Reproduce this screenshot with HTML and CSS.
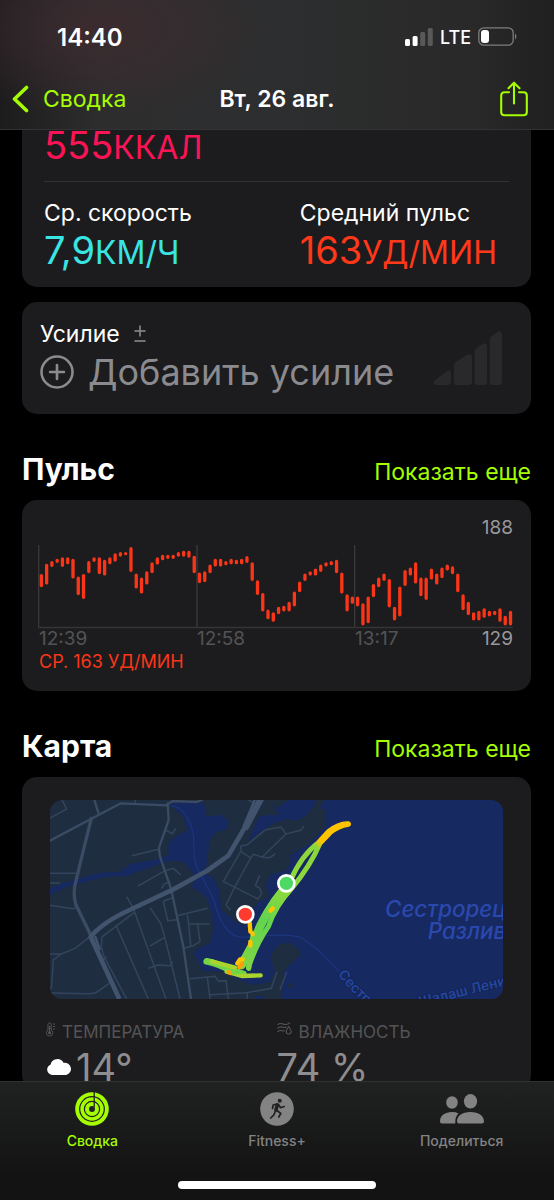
FILE: index.html
```html
<!DOCTYPE html>
<html lang="ru">
<head>
<meta charset="utf-8">
<meta name="viewport" content="width=device-width, initial-scale=1">
<title>Вт, 26 авг.</title>
<link rel="stylesheet" href="styles.css">
</head>
<body>
<div class="app">
  <header class="top">
    <div class="status">
      <span class="clock">14:40</span>
      <div class="status-icons">
        <svg class="signal" viewBox="0 0 28 18" aria-hidden="true">
          <rect x="0" y="11" width="5" height="7" rx="1.5" fill="#fff"/>
          <rect x="7.6" y="8" width="5" height="10" rx="1.5" fill="#fff"/>
          <rect x="15.2" y="4" width="5" height="14" rx="1.5" fill="#59595a"/>
          <rect x="22.8" y="0" width="5" height="18" rx="1.5" fill="#59595a"/>
        </svg>
        <span class="network">LTE</span>
        <svg class="battery" viewBox="0 0 39 20" aria-hidden="true">
          <rect x=".8" y=".8" width="34.4" height="17.4" rx="5" fill="none" stroke="#7d7d7f" stroke-width="1.3"/>
          <rect x="3" y="3" width="8" height="13" rx="3" fill="#fff"/>
          <path d="M37 6.5c1.8 1 1.8 5 0 6z" fill="#7d7d7f"/>
        </svg>
      </div>
    </div>
    <nav class="navbar">
      <a class="back" href="#summary">
        <svg class="chevron" viewBox="0 0 17 28" aria-hidden="true"><path d="M14.5 2.5 2.5 14l12 11.5" fill="none" stroke="currentColor" stroke-width="3.6" stroke-linecap="round" stroke-linejoin="round"/></svg>
        <span>Сводка</span>
      </a>
      <h1 class="title">Вт, 26 авг.</h1>
      <button class="share" type="button" aria-label="Поделиться тренировкой">
        <svg class="share-icon" viewBox="0 0 28 36" aria-hidden="true"><path d="M9 11.300H4.500Q1.200 11.300 1.200 14.600V31Q1.200 34.300 4.500 34.300H23.500Q26.800 34.300 26.800 31V14.600Q26.800 11.300 23.500 11.300H19M14 22.500V1.800M8.500 7.200 14 1.700l5.500 5.500" fill="none" stroke="currentColor" stroke-width="2.100" stroke-linecap="round" stroke-linejoin="round"/></svg>
      </button>
    </nav>
  </header>

  <main class="content">
    <section class="card metrics">
      <div class="metric-value kcal">555<span class="unit">ККАЛ</span></div>
      <div class="metric-grid">
        <div>
          <div class="label">Ср. скорость</div>
          <div class="metric-value speed">7,9<span class="unit">КМ/Ч</span></div>
        </div>
        <div>
          <div class="label">Средний пульс</div>
          <div class="metric-value pulse">163<span class="unit">УД/МИН</span></div>
        </div>
      </div>
    </section>

    <section class="card effort">
      <div>
        <div class="effort-head"><span class="label">Усилие</span><svg class="plus-minus" viewBox="0 0 12 18" aria-hidden="true"><path d="M6 1v10M1 6h10M1 16h10" fill="none" stroke="currentColor" stroke-width="1.500" stroke-linecap="round"/></svg></div>
        <button class="add" type="button">
          <svg class="add-icon" viewBox="0 0 32 32" aria-hidden="true"><circle cx="16" cy="16" r="14.600" fill="none" stroke="currentColor" stroke-width="2.400"/><path d="M16 9.500v13M9.500 16h13" stroke="currentColor" stroke-width="2.500" stroke-linecap="round"/></svg>
          <span>Добавить усилие</span>
        </button>
      </div>
      <svg class="effort-bars" viewBox="0 0 70 54" aria-hidden="true" fill="#29292b">
        <path d="M1.500 49.500 14 40q4-2 4 2v9q0 3-3 3H3q-4-1-1.500-4.500z"/>
        <path d="M21 35q0-3 2-4.500L34 24q5-2 5 2v25q0 3-3 3H24q-3 0-3-3z"/>
        <path d="M41.500 21q0-3 2-4l6-4q4.500-2 4.500 2v36q0 3-3 3h-6.500q-3 0-3-3z"/>
        <path d="M56.800 9q0-2.500 2-4l6-4.500Q69 -.5 69 4v47q0 3-3 3h-6.200q-3 0-3-3z"/>
      </svg>
    </section>

    <div class="section-head"><h2>Пульс</h2><a href="#pulse">Показать еще</a></div>
    <section class="card heart">
      <div class="max">188</div>
      <svg class="chart" id="chart" viewBox="0 0 1428 252" role="img" aria-label="График пульса">
        <path d="M2 0V248M478 0V248M952 0V248" stroke="#3a3a3c" stroke-width="4"/>
        <path d="M0 248H1428" stroke="#343437" stroke-width="5"/>
        <path id="bars" stroke="#fb3618" stroke-width="10" stroke-linecap="round"/>
      </svg>
      <div class="axis"><span>12:39</span><span>12:58</span><span class="last"><span>13:17</span><span class="min">129</span></span></div>
      <div class="average">СР. 163 УД/МИН</div>
    </section>

    <div class="section-head"><h2>Карта</h2><a href="#map">Показать еще</a></div>
    <section class="card place">
      <svg class="map" viewBox="30 30 1359 597" role="img" aria-label="Маршрут">
        <defs>
          <linearGradient id="track" gradientUnits="userSpaceOnUse" x1="930" y1="95" x2="600" y2="540">
            <stop offset="0" stop-color="#ffc400"/><stop offset=".18" stop-color="#ffc400"/><stop offset=".22" stop-color="#8bd63c"/><stop offset=".5" stop-color="#8fd93c"/><stop offset=".7" stop-color="#63d44e"/><stop offset="1" stop-color="#80d643"/>
          </linearGradient>
          <path id="river-label" d="M893 553Q940 620 1040 690"/>
        </defs>
        <rect x="30" y="30" width="1359" height="597" fill="#1f2d41"/>
        <path fill="#162960" d="M855 30 840 50 858 65 855 110 810 160 750 195 752 215 740 240 690 255 675 290 690 320 650 340 630 370 620 405 590 400 570 380 545 360 540 320 535 290 520 262 490 248 500 225 510 150 530 125 560 118 568 95 545 75 500 80 492 40 440 36 390 42 430 80 442 120 400 145 385 160 385 195 355 208 270 222 240 245 180 248 120 265 60 283 30 295 30 314 80 290 150 272 200 260 260 258 300 242 390 212 430 215 450 240 470 260 453 290 470 300 500 325 515 370 520 420 510 460 470 478 461 492 490 545 540 542 600 570 640 585 690 575 705 545 695 515 690 500 705 475 720 462 750 458 780 480 782 495 750 525 730 545 728 580 725 627 1389 627 1389 30Z"/>
        <path fill="#162960" d="M625 155 655 80 685 75 720 75 690 40 710 55 745 30H830L820 50 800 75 770 92 740 88 700 100 655 130ZM645 627l5-10 15 0 6 10z"/>
        <path fill="#1f2d41" d="m742 582 22-3-4 12-12 5z"/>
        <path fill="none" stroke="#1d3580" stroke-width="3.500" d="M392 48q30 0 50 35 18 30 19 70 0 60 12 85 30 55 50 95 20 90 70 107 30 5 100-4 80-3 100 13 40 25 105 95"/>
        <g fill="none" stroke="#33445c" stroke-width="4.500">
          <path d="M66 30 80 57 30 84M286 30v10M30 250H108M30 279H60M30 346 98 356 112 352M30 492H64L105 475 150 440M64 492 40 510 35 590 30 600M30 609 150 611 168 608 208 580M275 197 356 178M294 288 375 242 400 235 422 255M365 296 372 282 390 276M377 120 397 131 408 115M396 324 370 334 383 392 412 389M260 320 280 355 378 627M283 367 186 441 184 470 192 500 260 627M230 410 325 627M190 508 200 500M330 353 362 400 374 440 420 627M330 468 374 442M325 535 353 525 390 527 398 515M412 377 503 355M442 375 446 402H509M446 402 452 468M433 474 458 468 480 455 473 402M450 566 525 559 536 574 558 572 565 627M502 562 510 627M510 614 620 608 694 595 711 545M622 608 622 627"/>
          <path d="M602 168 604 185 632 204M602 168 620 165 677 119 723 111 738 132 782 121 792 108M738 132 666 202M632 204 640 193 668 202 690 203 706 191M602 185 550 274 654 327 665 310 659 294 646 287 659 256M632 204 582 296 558 345 571 360M625 30 640 38M740 545 720 600"/>
        </g>
        <g fill="none" stroke="#3b4b64" stroke-linecap="round">
          <path stroke-width="7" d="M30 152 242 40 378 46 398 33 470 36 485 30M163 30 175 68M383 40 386 90 358 170Q355 190 365 215L393 295 430 470 453 627"/>
          <path stroke-width="10" d="M154 85Q130 180 104 290 100 320 108 345L152 435"/>
        </g>
        <g fill="none" stroke="#42536d" stroke-linejoin="round">
          <path stroke-width="14" d="M659 28 610 120 565 197 500 243 400 298 275 357Q190 395 152 440L238 627"/>
          <path stroke-width="7" d="M645 28 610 110M669 28 620 120M165 438 180 480"/>
        </g>
        <text class="lake-name" x="1035" y="382">Сестрорецкий</text>
        <text class="lake-name" x="1163" y="448">Разлив</text>
        <text class="river-name"><textPath href="#river-label">Сестрорецк</textPath></text>
        <text class="river-name" transform="translate(1140 650) rotate(-14)">Шалаш Ленина</text>
        <g fill="none" stroke="url(#track)" stroke-linecap="round" stroke-linejoin="round">
          <path stroke-width="15" d="M925 101Q895 100 865 125L835 158Q785 195 752 270 690 330 662 400 640 460 600 520"/>
          <path stroke-width="15" d="M925 103Q895 108 870 128L840 160Q810 230 755 295 705 350 685 410 650 460 626 530"/>
          <path stroke-width="26" d="M745 292Q690 345 660 410L640 460 605 525"/>
          <path stroke-width="16" d="M640 430Q635 480 626 535"/>
        </g>
        <g fill="none" stroke-linecap="round" stroke-linejoin="round">
          <path stroke="#72d548" stroke-width="20" d="M500 514Q530 520 570 540L610 552"/>
          <path stroke="#a9d42e" stroke-width="13" d="M515 514 585 533M560 545 605 558 662 556"/>
          <path stroke="#ffc400" stroke-width="13" d="M629 398 631 425M631 455V467M592 520 600 508H608M638 431V433M692 362 698 355"/>
          <path stroke="#ff9d0a" stroke-width="13" d="M598 532 606 521M567 547 572 549"/>
          <path stroke="#72d548" stroke-width="15" d="M580 546 596 545"/>
        </g>
        <circle cx="616" cy="373" r="24" fill="#ff3b30" stroke="#fff" stroke-width="8"/>
        <circle cx="739" cy="280" r="24" fill="#4cd964" stroke="#fff" stroke-width="8"/>
      </svg>
      <div class="weather">
        <div>
          <div class="weather-label">
            <svg class="thermo" viewBox="0 0 9 15" aria-hidden="true"><path d="M2 8V2.500a1.600 1.600 0 0 1 3.200 0V8a3.200 3.200 0 1 1-3.200 0zM7 2h2M7 4.500h2M7 7h2" fill="none" stroke="currentColor" stroke-width="1"/><path d="M3.600 4v5" stroke="currentColor" stroke-width="1.200"/><circle cx="3.600" cy="10.700" r="1.600" fill="currentColor"/></svg>
            <span>ТЕМПЕРАТУРА</span>
          </div>
          <div class="weather-value">
            <svg class="cloud" viewBox="0 0 26 17" aria-hidden="true"><path d="M6 17a6 5.500 0 0 1-1.500-10.300A7 7 0 0 1 17.500 4.800 6.200 6.200 0 1 1 20 17z" fill="#fff"/></svg>
            <span>14°</span>
          </div>
        </div>
        <div>
          <div class="weather-label">
            <svg class="humid" viewBox="0 0 15 13" aria-hidden="true"><path d="M.500 2.800Q3 .800 6 2t6-.500l1-.700M.500 6.300Q3 4.300 6 5.200 8 5.800 9.500 5M.500 9.800Q3 7.800 6 9l2-.200M11.700 4.500Q9.200 8 9.200 9.500a2.500 2.500 0 0 0 5 0Q14.200 8 11.700 4.500z" fill="none" stroke="currentColor" stroke-width="1.100"/></svg>
            <span>ВЛАЖНОСТЬ</span>
          </div>
          <div class="weather-value">74 %</div>
        </div>
      </div>
    </section>
  </main>

  <footer class="bottom">
    <nav class="tabs">
      <a class="tab active" href="#summary">
        <svg class="tab-icon" viewBox="0 0 34 34" aria-hidden="true"><circle cx="17" cy="17" r="16.800" fill="currentColor"/><g fill="none" stroke="#202121" stroke-width="1.200"><circle cx="17" cy="17" r="12.300"/><circle cx="17" cy="17" r="7.600"/></g><circle cx="17" cy="17" r="3" fill="#202121"/><path d="M19.200 0v15" stroke="#202121" stroke-width="1.300"/></svg>
        <span>Сводка</span>
      </a>
      <a class="tab" href="#fitness">
        <svg class="tab-icon" viewBox="0 0 34 34" aria-hidden="true"><circle cx="17" cy="17" r="16.800" fill="currentColor"/><circle cx="19.700" cy="8.700" r="2" fill="#202121"/><g fill="none" stroke="#202121" stroke-linecap="round" stroke-linejoin="round"><path stroke-width="3.500" d="M17.300 13 15.900 18"/><path stroke-width="1.700" d="m17 12-3.800 1-.7 3.500M18.500 12.500l2 3.200 3.700-1.200M17 18.500l3.800 3-2 3.500M15.500 19l-1.800 4.200-3 2.800"/></g></svg>
        <span>Fitness+</span>
      </a>
      <a class="tab" href="#sharing">
        <svg class="tab-icon people" viewBox="0 0 44 34" aria-hidden="true" fill="currentColor"><ellipse cx="12" cy="10.500" rx="5.800" ry="6.200"/><ellipse cx="30.500" cy="9.300" rx="6.600" ry="7.200"/><path d="M0 29.500C0 23.500 5 20 12 20q4 0 6.500 1.400-3.500 3.300-3.200 9.600v.600H2Q0 31.600 0 29.500zM17 29.500C17 24 22 20 30.500 20S44 24 44 29.500q0 2.100-2 2.100H19q-2 0-2-2.100z"/></svg>
        <span>Поделиться</span>
      </a>
    </nav>
    <div class="home-indicator"></div>
  </footer>
</div>
<script src="chart.js"></script>
</body>
</html>
```
FILE: styles.css
```css
* { box-sizing: border-box; }
body {
  margin: 0;
  background: #000;
  color: #fff;
  font-family: Inter, "Noto Sans", sans-serif;
}
a { color: inherit; text-decoration: none; }
button { padding: 0; border: 0; background: none; color: inherit; font: inherit; }
svg { display: block; flex: none; }
h1, h2 { margin: 0; }

.app { display: flex; flex-direction: column; height: 100vh; }

.top {
  flex: none;
  padding-bottom: 4px;
  border-bottom: 1px solid #333335;
  background:
    radial-gradient(ellipse 170px 90px at 18% 22%, #3b2b2f, transparent),
    linear-gradient(90deg, #1d1c1d, #2d2d2e 18%, #2d2e2f 50%, #292929 85%, #202020);
}
.status {
  display: flex;
  align-items: center;
  justify-content: space-between;
  height: 66px;
  padding: 8px 37px 0 57px;
}
.clock { font-size: 24px; font-weight: 600; }
.status-icons { display: flex; align-items: center; gap: 7px; }
.signal { width: 28px; height: 18px; }
.network { font-size: 18px; font-weight: 500; }
.battery { width: 39px; height: 20px; }

.navbar {
  display: grid;
  grid-template-columns: 1fr auto 1fr;
  align-items: center;
  height: 59px;
  padding: 6px 12px 0;
}
.back { display: flex; align-items: center; gap: 14px; color: #a5fd02; font-size: 23px; }
.chevron { width: 17px; height: 28px; }
.title { font-size: 23px; font-weight: 600; }
.share { justify-self: end; margin-right: 14px; color: #a5fd02; }
.share-icon { width: 28px; height: 36px; }

.content { flex: 1; min-height: 0; overflow: hidden; padding: 0 23px 0 22px; }
.card { background: #1c1c1e; border-radius: 15px; }

.metrics { padding: 0 22px 17px; border-radius: 0 0 15px 15px; }
.label { font-size: 23px; line-height: 28px; }
.metric-value { font-size: 38px; line-height: 40px; white-space: nowrap; }
.unit { font-size: 32px; line-height: 0; }
.kcal { padding-bottom: 21px; border-bottom: 1px solid #323234; line-height: 30px; color: #fb1455; }
.metric-grid { display: grid; grid-template-columns: 55% 45%; padding-top: 17px; }
.metric-grid .metric-value { margin-top: 3px; }
.speed { color: #38e5e2; }
.pulse { color: #ff3819; }

.effort {
  display: flex;
  align-items: center;
  justify-content: space-between;
  margin-top: 15px;
  padding: 18px 28px 18px 18px;
}
.effort-head { display: flex; align-items: center; gap: 14px; color: #8e8e92; }
.effort-head .label { color: #fff; }
.plus-minus { width: 12px; height: 18px; }
.add { display: flex; align-items: center; gap: 14px; color: #8b8b8f; font-size: 36px; line-height: 48px; white-space: nowrap; }
.add-icon { width: 34px; height: 34px; }
.effort-bars { width: 70px; height: 54px; }

.section-head { display: flex; align-items: baseline; justify-content: space-between; height: 86px; padding-top: 36px; }
.section-head h2 { font-size: 30px; line-height: 38px; font-weight: 700; }
.section-head a { color: #a5fd02; font-size: 23px; }

.heart { padding: 14px 18px 16px 16px; }
.max { color: #98989d; font-size: 19px; line-height: 28px; text-align: right; }
.chart { width: 100%; height: auto; margin-top: 3px; }
.axis { display: grid; grid-template-columns: repeat(3, 1fr); color: #535355; font-size: 19px; line-height: 20px; padding-left: 1px; }
.last { display: flex; justify-content: space-between; }
.min { color: #98989d; }
.average { padding-left: 1px; color: #fb3618; font-size: 18px; line-height: 26px; }

.place { padding: 23px 28px 0; }
.map { width: 100%; height: auto; border-radius: 12px; }
.lake-name { fill: #2b48ad; font-size: 67px; font-style: italic; font-weight: 500; }
.river-name { fill: #2446a0; stroke: #14234f; stroke-width: 5px; paint-order: stroke; font-size: 42px; font-weight: 600; }
.weather { display: grid; grid-template-columns: 1fr 1fr; margin: 0 -4px; padding-top: 21px; }
.weather-label { display: flex; align-items: center; gap: 7px; color: #545456; font-size: 17px; line-height: 24px; }
.weather-label svg { align-self: flex-start; margin-top: 2px; }
.thermo { width: 9px; height: 15px; }
.humid { width: 15px; height: 13px; }
.weather-value { display: flex; align-items: center; gap: 4px; color: #8e8e90; font-size: 38px; line-height: 46px; }
.cloud { width: 26px; height: 17px; }

.bottom {
  flex: none;
  border-top: 1px solid #323233;
  background: linear-gradient(#202121, #131313 80%);
}
.tabs { display: grid; grid-template-columns: repeat(3, 1fr); height: 99px; padding-top: 10px; }
.tab { display: flex; flex-direction: column; align-items: center; gap: 6px; color: #838384; font-size: 14px; line-height: 18px; font-weight: 500; }
.tab.active { color: #a5fd02; }
.tab-icon { width: 34px; height: 34px; }
.people { width: 44px; }
.home-indicator { width: 198px; height: 8px; margin: 0 auto 11px; border-radius: 4px; background: #fff; }
```
FILE: chart.js
```js
// Heart-rate range (top, bottom) for each interval of the workout.
const ranges = [
  [224,262],[193,254],[185,201],[178,189],[174,201],[174,193],[178,236],[232,286],[224,297],[185,220],
  [174,186],[174,223],[181,227],[174,193],[162,185],[158,170],[158,166],[143,216],[223,266],[235,281],
  [216,254],[189,220],[174,194],[166,181],[166,177],[166,177],[158,170],[154,170],[154,173],[169,220],
  [220,250],[216,247],[196,220],[178,200],[178,200],[185,196],[178,193],[181,193],[178,193],[170,189],
  [189,243],[243,285],[281,335],[331,358],[339,366],[323,343],[320,335],[308,335],[277,320],[247,277],
  [223,243],[216,227],[208,227],[196,216],[189,200],[185,196],[181,220],[220,281],[285,335],[292,312],
  [292,320],[312,377],[292,370],[254,292],[235,262],[223,243],[239,323],[323,362],[262,350],[212,258],
  [205,227],[189,251],[235,289],[235,300],[208,239],[223,254],[205,235],[196,212],[201,223],[223,277],
  [285,331],[308,346],[339,362],[335,362],[327,354],[335,350],[335,346],[327,366],[350,377],[335,377]
];
const top0 = 136, cap = 4, step = 15.85;
document.getElementById('bars').setAttribute('d', ranges.map(([a, b], i) =>
  `M${(10 + i * step).toFixed(1)} ${a - top0 + cap}V${b - top0 - cap}`).join(''));
```
